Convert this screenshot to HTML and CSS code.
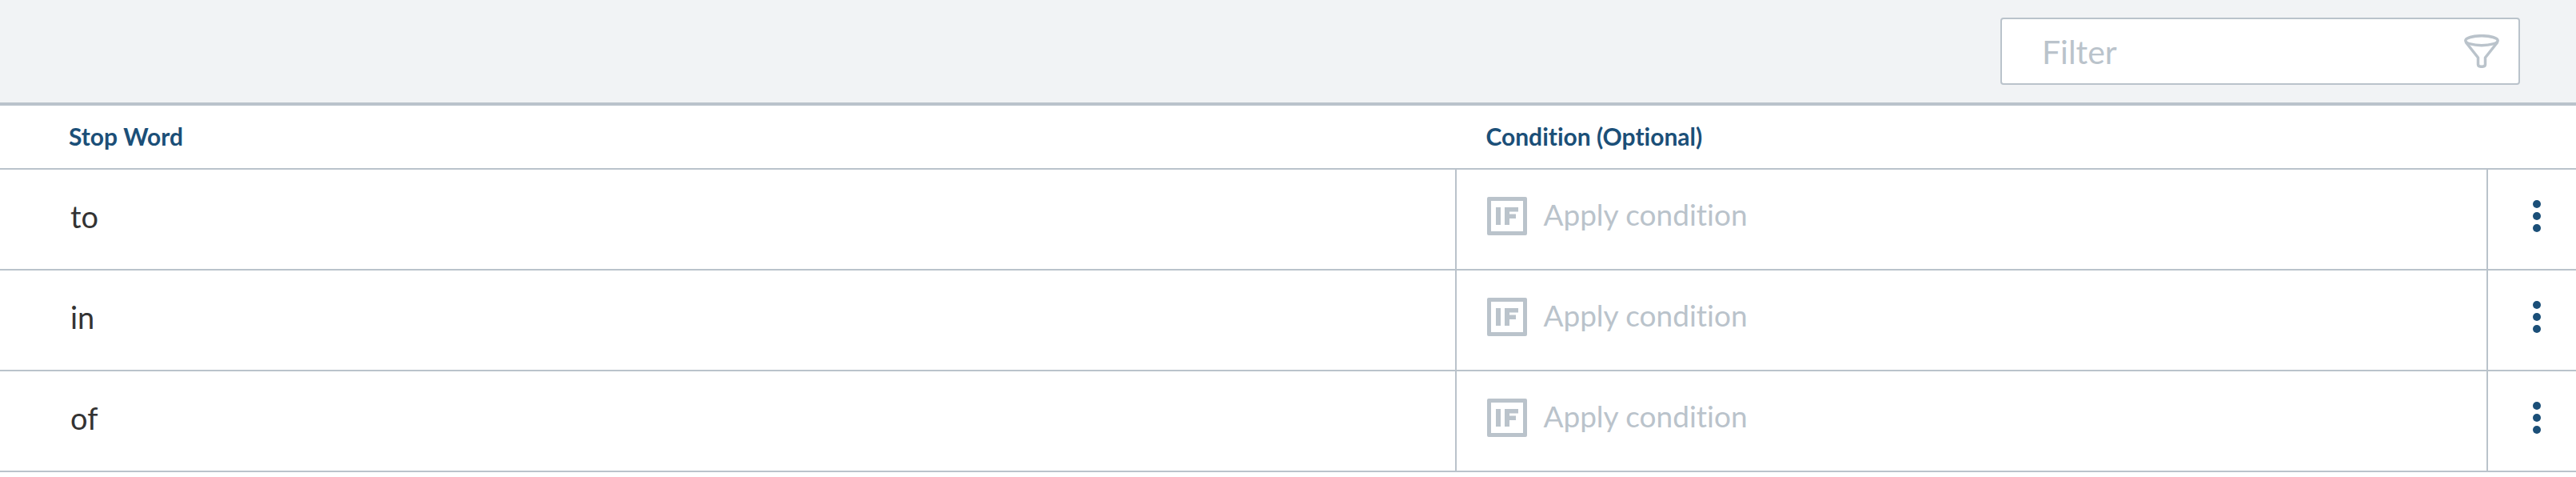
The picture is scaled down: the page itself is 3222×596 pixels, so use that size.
FILE: index.html
```html
<!DOCTYPE html>
<html lang="en">
<head>
<meta charset="utf-8">
<title>Stop Words</title>
<link rel="stylesheet" href="styles.css">
</head>
<body>
<svg class="sprite" aria-hidden="true">
  <symbol id="icon-if" viewBox="0 0 50 48">
    <path fill="currentColor" d="M0 2a2 2 0 0 1 2-2h46a2 2 0 0 1 2 2v44a2 2 0 0 1-2 2H2a2 2 0 0 1-2-2zM5 5v38h40V5z" fill-rule="evenodd"/>
    <path fill="currentColor" d="M11 13h6v22h-6zM22 13h17v5.500H28v3h8v5.500h-8v8h-6z"/>
  </symbol>
  <symbol id="icon-dots" viewBox="0 0 10 40">
    <g fill="currentColor"><circle cx="5" cy="5" r="5"/><circle cx="5" cy="20" r="5"/><circle cx="5" cy="35" r="5"/></g>
  </symbol>
</svg>
<header class="toolbar">
  <label class="filter">
    <input class="filter-input" type="text" placeholder="Filter" aria-label="Filter">
    <svg class="filter-icon" viewBox="0 0 44 42" aria-hidden="true">
      <g fill="none" stroke="currentColor" stroke-width="3.500" stroke-linejoin="round">
        <ellipse cx="22" cy="7.700" rx="20.200" ry="6"/>
        <path d="M2 9.500L17.500 29v8.500c0 2 2 2.800 4.500 2.800s4.500-.8 4.500-2.800v-8.500L42 9.500"/>
      </g>
    </svg>
  </label>
</header>
<table class="words">
  <colgroup><col class="col-word"><col><col class="col-menu"></colgroup>
  <thead>
    <tr><th scope="col">Stop Word</th><th scope="col" class="head-condition">Condition (Optional)</th><td></td></tr>
  </thead>
  <tbody>
    <tr>
      <td class="word">to</td>
      <td class="condition"><button class="apply" type="button"><svg class="if-icon" aria-hidden="true"><use href="#icon-if"/></svg><span>Apply condition</span></button></td>
      <td class="menu"><button class="more" type="button" aria-label="More actions"><svg class="dots-icon" aria-hidden="true"><use href="#icon-dots"/></svg></button></td>
    </tr>
    <tr>
      <td class="word">in</td>
      <td class="condition"><button class="apply" type="button"><svg class="if-icon" aria-hidden="true"><use href="#icon-if"/></svg><span>Apply condition</span></button></td>
      <td class="menu"><button class="more" type="button" aria-label="More actions"><svg class="dots-icon" aria-hidden="true"><use href="#icon-dots"/></svg></button></td>
    </tr>
    <tr>
      <td class="word">of</td>
      <td class="condition"><button class="apply" type="button"><svg class="if-icon" aria-hidden="true"><use href="#icon-if"/></svg><span>Apply condition</span></button></td>
      <td class="menu"><button class="more" type="button" aria-label="More actions"><svg class="dots-icon" aria-hidden="true"><use href="#icon-dots"/></svg></button></td>
    </tr>
  </tbody>
</table>
</body>
</html>
```

FILE: styles.css
```css
* { box-sizing: border-box; }

body {
  margin: 0;
  background: #fff;
  color: #333;
  font-family: Lato, "Liberation Sans", sans-serif;
  font-variant-ligatures: none;
}

.sprite { display: none; }

button {
  margin: 0;
  padding: 0;
  border: 0;
  background: none;
  font: inherit;
  font-variant-ligatures: none;
  cursor: pointer;
}

.toolbar {
  display: flex;
  justify-content: flex-end;
  padding: 22px 70px;
  background: #f1f3f5;
  border-bottom: 4px solid #bac3cb;
}

.filter {
  display: flex;
  align-items: center;
  width: 650px;
  height: 84px;
  padding: 0 24px 0 50px;
  border: 2px solid #bac3cb;
  border-radius: 4px;
  background: #fff;
  color: #bac3cb;
}

.filter-input {
  flex: 1;
  min-width: 0;
  padding: 2px 0 0;
  border: 0;
  outline: 0;
  background: none;
  color: #333;
  font: 41px/48px Lato, "Liberation Sans", sans-serif;
}

.filter-input::placeholder { color: #bac3cb; opacity: 1; }

.filter-icon {
  width: 44px;
  height: 42px;
}

.words {
  width: 100%;
  table-layout: fixed;
  border-collapse: separate;
  border-spacing: 0;
}

.col-word { width: 56.5%; }
.col-menu { width: 112px; }

th, td {
  padding: 0;
  border-bottom: 2px solid #bac3cb;
  text-align: left;
}

th {
  height: 80px;
  padding: 0 0 2px 86px;
  color: #1b4f78;
  font-size: 30px;
  line-height: 36px;
  font-weight: 700;
}

.head-condition { padding-left: 38px; }

.word {
  height: 126px;
  padding: 0 0 8px 88px;
  font-size: 38px;
  line-height: 46px;
}

.condition, .menu {
  padding-bottom: 8px;
  border-left: 2px solid #bac3cb;
}

.condition { padding-left: 38px; }

.apply {
  display: flex;
  align-items: center;
  gap: 20px;
  color: #bac3cb;
  font-size: 37px;
  line-height: 44px;
}

.apply span { padding-bottom: 4px; }

.if-icon {
  width: 50px;
  height: 48px;
}

.menu { padding-left: 12px; }

.more {
  display: flex;
  margin: 0 auto;
  padding: 0 12px;
  color: #1b4f78;
}

.dots-icon {
  width: 10px;
  height: 40px;
}
```
